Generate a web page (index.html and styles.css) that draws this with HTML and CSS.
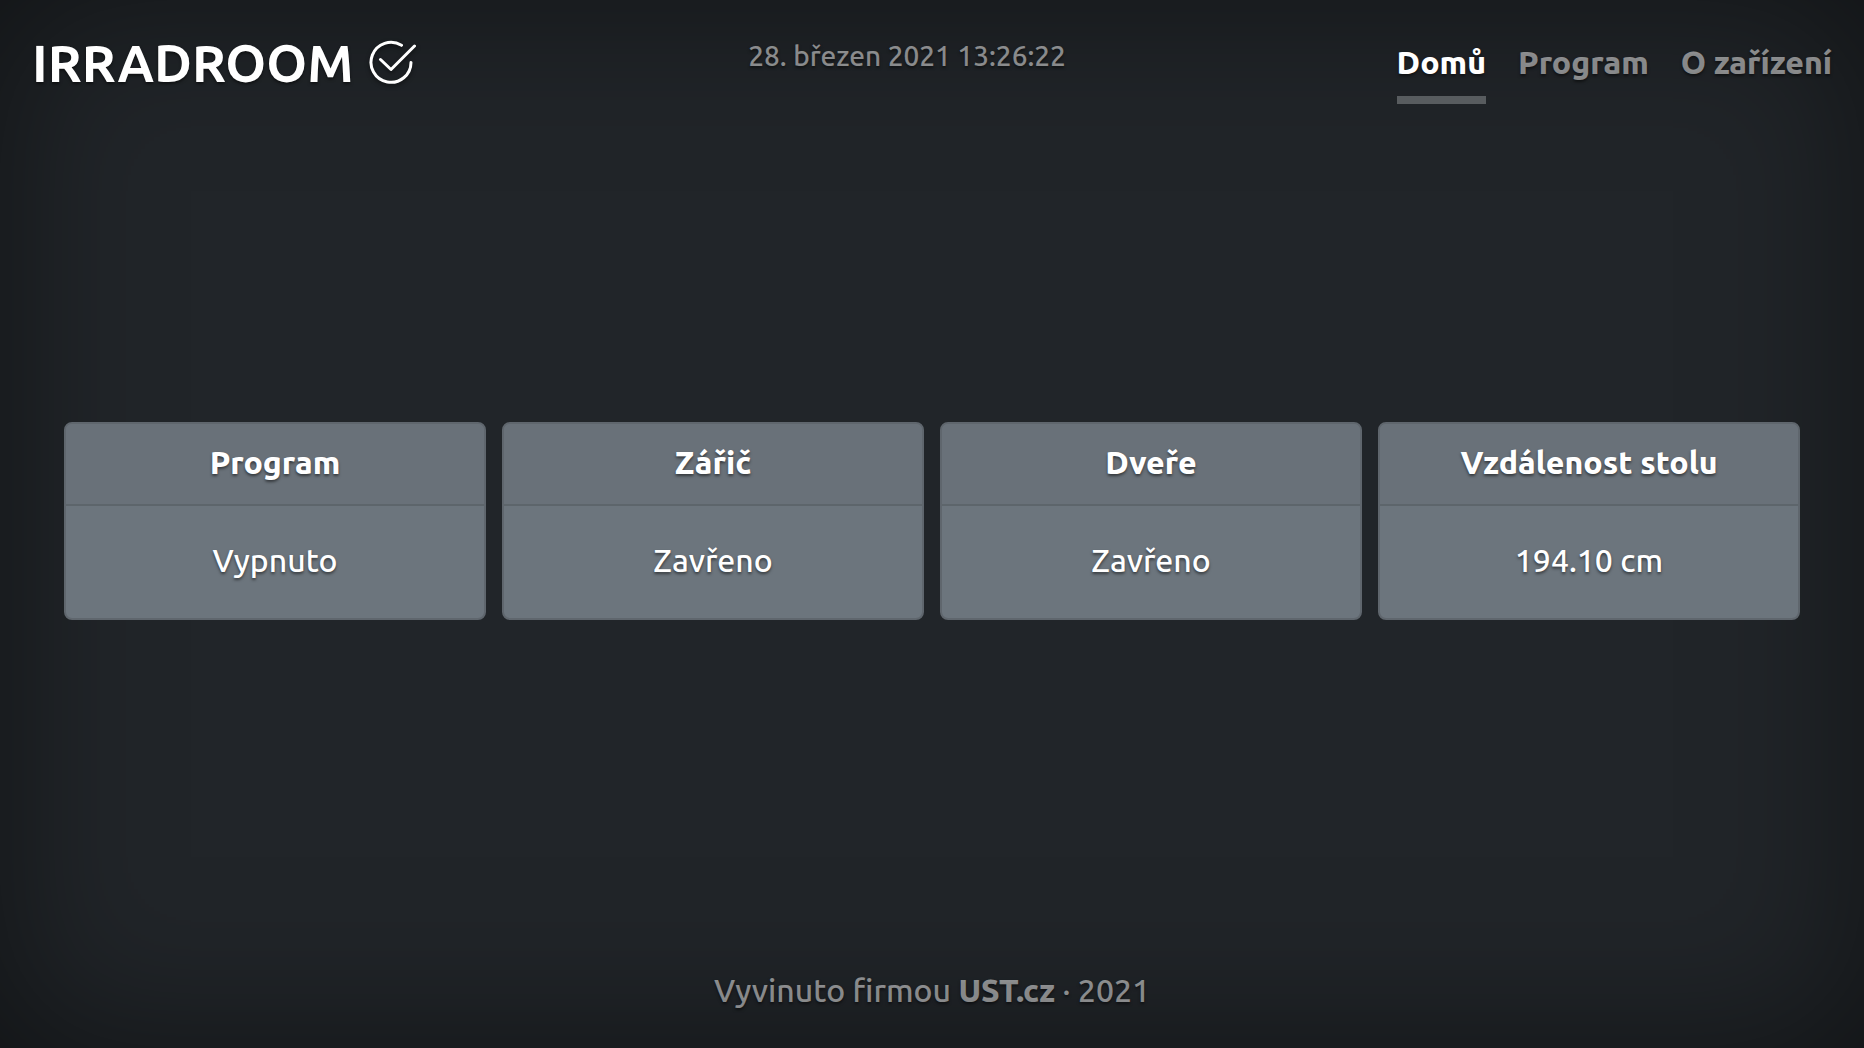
FILE: index.html
```
<!DOCTYPE html>
<html lang="cs">
<head>
<meta charset="utf-8">
<meta name="viewport" content="width=device-width, initial-scale=1">
<title>IRRADROOM</title>
<link rel="stylesheet" href="styles.css">
</head>
<body>
<div class="cover">
  <header class="masthead">
    <h1 class="brand">IRRADROOM
      <svg class="brand-icon" viewBox="0 0 48 48" fill="none" stroke="currentColor" stroke-width="3" stroke-linecap="round" stroke-linejoin="round" aria-hidden="true">
        <path d="M32.500 6.300A20 20 0 1 0 42 23.400"/>
        <path d="M11.500 20.500L22 30.500L45.500 7"/>
      </svg>
    </h1>
    <time class="clock" datetime="2021-03-28T13:26:22">28. březen 2021 13:26:22</time>
    <nav class="nav">
      <a class="nav-link active" href="#" aria-current="page">Domů</a>
      <a class="nav-link" href="#program">Program</a>
      <a class="nav-link" href="#device">O zařízení</a>
    </nav>
  </header>
  <main class="cards">
    <section class="card"><h2 class="card-header">Program</h2><p class="card-body">Vypnuto</p></section>
    <section class="card"><h2 class="card-header">Zářič</h2><p class="card-body">Zavřeno</p></section>
    <section class="card"><h2 class="card-header">Dveře</h2><p class="card-body">Zavřeno</p></section>
    <section class="card"><h2 class="card-header">Vzdálenost stolu</h2><p class="card-body">194.10 cm</p></section>
  </main>
  <footer class="footer">Vyvinuto firmou <a class="footer-link" href="#ust">UST.cz</a> · 2021</footer>
</div>
</body>
</html>
```
FILE: styles.css
```
* {
  box-sizing: border-box;
}

body {
  margin: 0;
  background: #212529;
  color: #fff;
  font: 500 32px/44px Ubuntu, "Noto Sans", sans-serif;
  text-shadow: 0 2px 3px rgba(0, 0, 0, .5);
}

.cover {
  display: flex;
  flex-direction: column;
  justify-content: space-between;
  min-height: 100vh;
  padding: 32px;
  box-shadow: inset 0 0 160px rgba(0, 0, 0, .5);
}

.masthead {
  display: flex;
  flex-wrap: wrap;
  justify-content: space-between;
  align-items: flex-start;
}

.brand {
  display: flex;
  align-items: center;
  gap: 16px;
  margin: 0;
  font-family: Ubuntu, "Open Sans", sans-serif;
  font-size: 52px;
  font-weight: 600;
  line-height: 62px;
}

.brand-icon {
  width: 48px;
  height: 48px;
  filter: drop-shadow(0 2px 2px rgba(0, 0, 0, .5));
}

.clock {
  color: rgba(255, 255, 255, .5);
  font-size: 28px;
  line-height: 48px;
}

.nav {
  display: flex;
  gap: 32px;
}

.nav-link {
  padding: 8px 0 12px;
  border-bottom: 8px solid transparent;
  color: rgba(255, 255, 255, .5);
  font-weight: 800;
  text-decoration: none;
}

.nav-link.active {
  border-bottom-color: #585c5f;
  color: #fff;
}

.cards {
  display: grid;
  grid-template-columns: repeat(4, 1fr);
  gap: 16px;
  padding: 0 32px 30px;
}

.card {
  border: 2px solid #5f666d;
  border-radius: 8px;
  background: #6c757d;
  text-align: center;
  overflow: hidden;
}

.card-header {
  margin: 0;
  padding: 16px 16px 20px;
  border-bottom: 2px solid #5d656b;
  background: #697179;
  font-size: 32px;
  font-weight: 800;
}

.card-body {
  margin: 0;
  padding: 32px 32px 36px;
}

.footer {
  padding-bottom: 4px;
  color: rgba(255, 255, 255, .5);
  text-align: center;
}

.footer-link {
  color: inherit;
  font-weight: 800;
  text-decoration: none;
}
```
